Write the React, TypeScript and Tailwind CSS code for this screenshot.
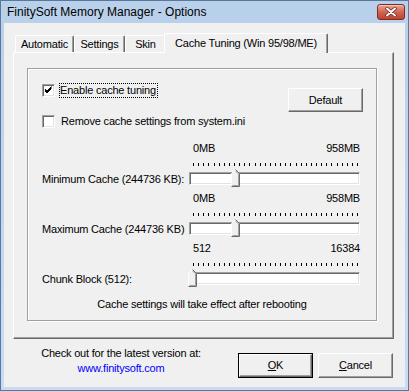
import React from "react";

function Ticks() {
  const xs = Array.from({ length: 33 }, (_, i) => Math.round(4 + (i * 164) / 32));
  return (
    <svg width="171" height="3" className="block">
      {xs.map((x) => (
        <rect key={x} x={x} y={0} width={1} height={3} fill="#000" />
      ))}
    </svg>
  );
}

function Thumb() {
  return (
    <svg width="9" height="18" viewBox="0 0 9 18" className="block">
      <path d="M0.5 17.5 V4.5 L4.5 0.5 L8.5 4.5 V17.5 Z" fill="#f0f0f0" />
      <path d="M0.5 17 V4.5 L4.5 0.5" stroke="#fff" fill="none" />
      <path d="M4.5 0.5 L8.5 4.5 V17.5 H0.5" stroke="#696969" fill="none" />
      <path d="M4.5 1.9 L7.5 4.9 V16.5 H1.5" stroke="#a0a0a0" fill="none" />
    </svg>
  );
}

function SliderRow({ label, min, max, pos }: { label: string; min: string; max: string; pos: number }) {
  return (
    <div className="flex h-[50px]">
      <div className="w-[147px] pt-[31px] leading-[13px] whitespace-nowrap">{label}</div>
      <div className="w-[171px] flex flex-col">
        <div className="flex justify-between leading-[13px] h-[13px] pl-[4px]">
          <span>{min}</span>
          <span>{max}</span>
        </div>
        <div className="mt-[8px]">
          <Ticks />
        </div>
        <div className="relative mt-[6px] h-[13px] bg-white border border-t-[#a0a0a0] border-l-[#a0a0a0] border-r-white border-b-white shadow-[inset_1px_1px_0_#696969,inset_-1px_-1px_0_#e3e3e3]">
          <div className="absolute top-[-4px]" style={{ left: pos }}>
            <Thumb />
          </div>
        </div>
      </div>
    </div>
  );
}

function Checkbox({ checked }: { checked?: boolean }) {
  return (
    <div className="w-[13px] h-[13px] shrink-0 bg-white border border-t-[#a0a0a0] border-l-[#a0a0a0] border-r-white border-b-white shadow-[inset_1px_1px_0_#696969,inset_-1px_-1px_0_#e3e3e3] flex items-center justify-center">
      {checked && (
        <svg width="11" height="11" viewBox="0 0 11 11" className="block">
          <path d="M2 4 L4 6 L8.5 1.5 M2 5 L4 7 L8.5 2.5 M2 6 L4 8 L8.5 3.5" stroke="#000" strokeWidth="1" fill="none" />
        </svg>
      )}
    </div>
  );
}

function Btn({ children, className = "" }: { children: React.ReactNode; className?: string }) {
  return (
    <div
      className={`w-[75px] flex items-center justify-center bg-[#f0f0f0] border border-t-white border-l-white border-r-[#696969] border-b-[#696969] shadow-[inset_-1px_-1px_0_#a0a0a0] ${className}`}
    >
      {children}
    </div>
  );
}

function DefBtn({ children, className = "" }: { children: React.ReactNode; className?: string }) {
  return (
    <div className={`w-[75px] border border-black ${className}`}>
      <div className="w-full h-full flex items-center justify-center bg-[#f0f0f0] border border-t-white border-l-white border-r-[#696969] border-b-[#696969] shadow-[inset_-1px_-1px_0_#a0a0a0]">
        {children}
      </div>
    </div>
  );
}

function Tab({ children, w, className = "" }: { children: React.ReactNode; w: string; className?: string }) {
  return (
    <div
      className={`${w} h-[17px] flex items-center justify-center rounded-t-[2px] border-l border-t border-r border-l-white border-t-white border-r-[#696969] shadow-[inset_-1px_0_0_#a0a0a0] leading-[13px] ${className}`}
    >
      {children}
    </div>
  );
}

export default function App() {
  return (
    <div className="w-[409px] h-[391px] flex flex-col border border-[#5a789c] bg-gradient-to-b from-[#b8d0ea] to-[#c9dcf1] text-[11px] text-black font-['Liberation_Sans',Arial,sans-serif]">
      {/* Title bar */}
      <div className="h-[22px] flex items-center justify-between pl-[6px] pr-[3px]">
        <span className="text-[12px] leading-[15px]">FinitySoft Memory Manager - Options</span>
        <div className="w-[28px] h-[16px] rounded-[3px] border border-[#7e2b22] bg-gradient-to-b from-[#e8a597] via-[#d06552] to-[#c2402f] flex items-center justify-center shadow-[inset_0_1px_0_#f2c4b8]">
          <svg width="12" height="10" viewBox="0 0 12 10" className="block">
            <path d="M2 1.5 L10 8.5 M10 1.5 L2 8.5" stroke="#6b2018" strokeWidth="3.4" strokeLinecap="round" />
            <path d="M2 1.5 L10 8.5 M10 1.5 L2 8.5" stroke="#fff" strokeWidth="2" strokeLinecap="round" />
          </svg>
        </div>
      </div>

      {/* Client */}
      <div className="mx-[3px] mb-[3px] flex-1 flex flex-col bg-[#f0f0f0] tracking-[-0.2px]">
        <div className="pl-[9px] pr-[11px] pt-[10px] flex flex-col">
          {/* Tabs */}
          <div className="h-[19px] flex items-end">
            <Tab w="w-[59px] ml-[2px]">Automatic</Tab>
            <Tab w="w-[51px]">Settings</Tab>
            <Tab w="w-[41px]">Skin</Tab>
            <div className="relative z-10 w-[164px] h-[20px] -mb-[1px] -ml-[2px] flex items-center justify-center rounded-t-[2px] bg-[#f0f0f0] border-l border-t border-r border-l-white border-t-white border-r-[#696969] shadow-[inset_-1px_0_0_#a0a0a0] leading-[13px] pb-[1px]">
              Cache Tuning (Win 95/98/ME)
            </div>
          </div>

          {/* Panel */}
          <div className="h-[287px] border border-t-white border-l-white border-r-[#696969] border-b-[#696969] shadow-[inset_-1px_-1px_0_#a0a0a0] pl-[13px] pt-[15px]">
            <div className="w-[350px] h-[253px] border border-[#a0a0a0] shadow-[inset_1px_1px_0_#fff,1px_1px_0_#fff] flex flex-col">
              <div className="flex items-start justify-between pl-[14px] pr-[13px]">
                <div className="pt-[14px] flex flex-col">
                  <div className="flex items-center h-[15px]">
                    <Checkbox checked />
                    <span className="ml-[4px] border border-dotted border-black leading-[13px] pr-[1px]">
                      Enable cache tuning
                    </span>
                  </div>
                  <div className="flex items-center h-[15px] mt-[16px]">
                    <Checkbox />
                    <span className="ml-[6px] leading-[13px]">Remove cache settings from system.ini</span>
                  </div>
                </div>
                <Btn className="h-[24px] mt-[19px]">Default</Btn>
              </div>

              <div className="mt-[13px] pl-[14px] flex flex-col">
                <SliderRow label="Minimum Cache (244736 KB):" min="0MB" max="958MB" pos={41} />
                <SliderRow label="Maximum Cache (244736 KB)" min="0MB" max="958MB" pos={41} />
                <SliderRow label="Chunk Block (512):" min="512" max="16384" pos={-2} />
              </div>

              <div className="mt-[6px] text-center leading-[13px]">Cache settings will take effect after rebooting</div>
            </div>
          </div>
        </div>

        {/* Bottom */}
        <div className="flex-1 flex">
          <div className="w-[234px] pt-[8px] flex flex-col items-center leading-[13px]">
            <span>Check out for the latest version at:</span>
            <span className="mt-[2px] text-[#0000ff]">www.finitysoft.com</span>
          </div>
          <div className="ml-auto flex items-start pt-[14px] pr-[12px] gap-[5px]">
            <DefBtn className="h-[25px]">
              <span>
                <span className="underline">O</span>K
              </span>
            </DefBtn>
            <Btn className="h-[25px]">
              <span>
                <span className="underline">C</span>ancel
              </span>
            </Btn>
          </div>
        </div>
      </div>
    </div>
  );
}
